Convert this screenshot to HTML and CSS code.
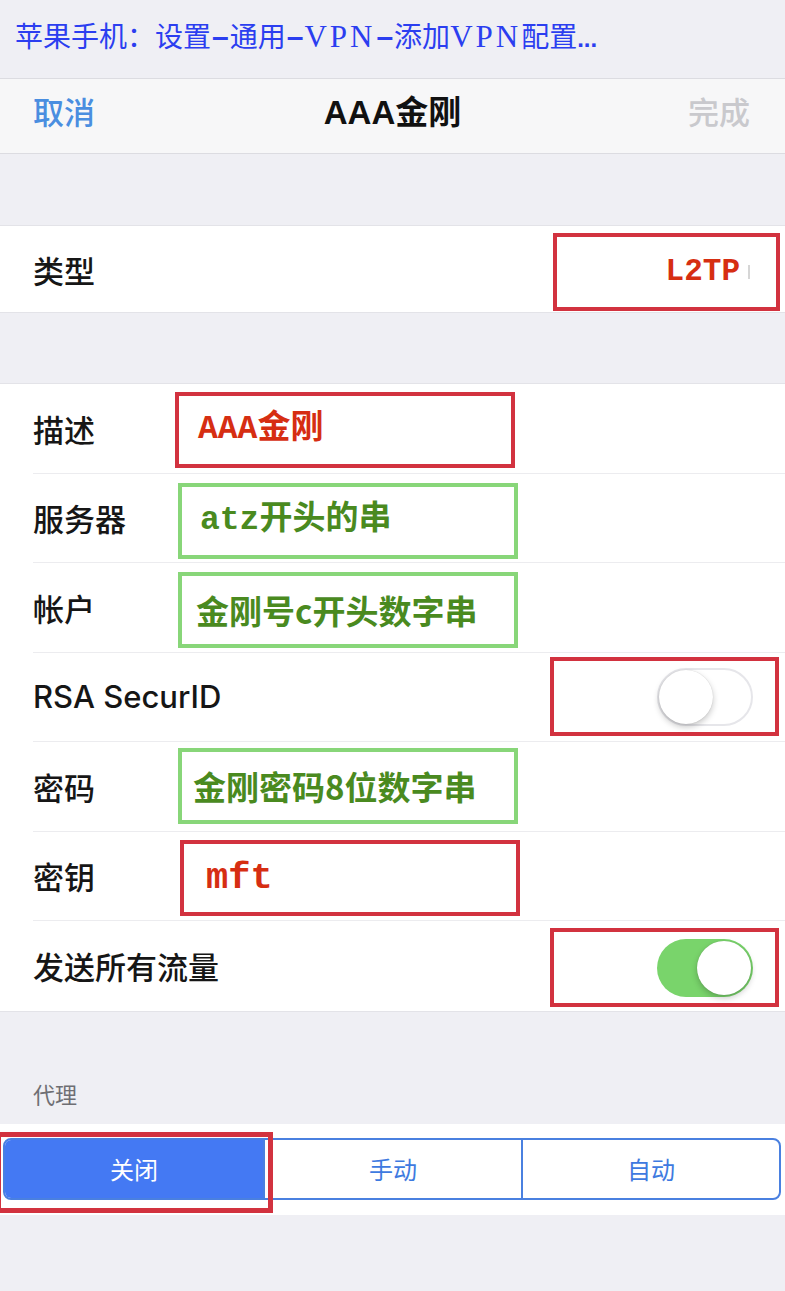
FILE: index.html
```html
<!DOCTYPE html>
<html lang="zh-CN">
<head>
<meta charset="utf-8">
<title>VPN 配置</title>
<link rel="stylesheet" href="styles.css">
</head>
<body>
<div class="caption">苹果手机：设置<span class="dash">–</span>通用<span class="dash">–</span><span class="lat">VPN</span><span class="dash">–</span>添加<span class="lat">VPN</span>配置<span class="dots">...</span></div>

<div class="navbar">
  <span class="nav-cancel">取消</span>
  <span class="nav-title">AAA金刚</span>
  <span class="nav-done">完成</span>
</div>

<div class="gap gap-top"></div>

<div class="group group-type">
  <div class="row row-type">
    <span class="label">类型</span>
    <div class="mark mark-red mark-right mark-type">
      <span class="val val-red mono val-type">L2TP</span><span class="caret"></span>
    </div>
  </div>
</div>

<div class="gap gap-mid"></div>

<div class="group">
  <div class="row">
    <span class="label">描述</span>
    <div class="mark mark-red field field-desc"><span class="val val-red mono">AAA金刚</span></div>
  </div>
  <div class="row">
    <span class="label">服务器</span>
    <div class="mark mark-green field field-server"><span class="val val-green mono">atz开头的串</span></div>
  </div>
  <div class="row">
    <span class="label">帐户</span>
    <div class="mark mark-green field field-account"><span class="val val-green sans">金刚号c开头数字串</span></div>
  </div>
  <div class="row">
    <span class="label">RSA SecurID</span>
    <div class="mark mark-red mark-right mark-switch">
      <div class="switch switch-off"><div class="knob"></div></div>
    </div>
  </div>
  <div class="row">
    <span class="label">密码</span>
    <div class="mark mark-green field field-pass"><span class="val val-green sans">金刚密码8位数字串</span></div>
  </div>
  <div class="row">
    <span class="label">密钥</span>
    <div class="mark mark-red field field-key"><span class="val val-red mono val-key">mft</span></div>
  </div>
  <div class="row row-last">
    <span class="label">发送所有流量</span>
    <div class="mark mark-red mark-right mark-switch mark-switch-on">
      <div class="switch switch-on"><div class="knob"></div></div>
    </div>
  </div>
</div>

<div class="section-head">代理</div>

<div class="seg-row">
  <div class="segmented">
    <span class="seg seg-active">关闭</span>
    <span class="seg">手动</span>
    <span class="seg">自动</span>
  </div>
  <div class="seg-mark"></div>
</div>
</body>
</html>
```
FILE: styles.css
```css
* { box-sizing: border-box; }

html, body {
  margin: 0;
  padding: 0;
}

body {
  width: 785px;
  min-height: 1291px;
  background: #efeff4;
  font-family: "Liberation Sans", "Noto Sans CJK SC", sans-serif;
  color: #151515;
  overflow: hidden;
}

/* caption */
.caption {
  height: 78px;
  padding: 16px 0 0 15px;
  font-family: "Noto Sans CJK SC", sans-serif;
  font-size: 28px;
  line-height: 38px;
  color: #2b3ef0;
  white-space: nowrap;
}
.caption .lat {
  font-family: "Liberation Serif", serif;
  font-size: 31px;
  letter-spacing: 3px;
}
.caption .dash {
  font-family: "Liberation Sans", sans-serif;
  font-weight: bold;
  font-size: 30px;
  padding: 0 1px;
}
.caption .dots {
  font-family: "Liberation Sans", sans-serif;
  font-weight: bold;
  font-size: 24px;
}

/* nav bar */
.navbar {
  height: 76px;
  display: grid;
  grid-template-columns: 1fr auto 1fr;
  align-items: center;
  padding-bottom: 12px;
  background: #f7f7f8;
  border-top: 1px solid #dcdce1;
  border-bottom: 1px solid #dcdce1;
  font-size: 31px;
}
.nav-cancel {
  padding-left: 33px;
  color: #4a8ee0;
  font-family: "Noto Sans CJK SC", sans-serif;
  font-weight: 500;
}
.nav-title {
  font-weight: bold;
  color: #111;
  font-size: 33px;
}
.nav-done {
  text-align: right;
  padding-right: 35px;
  color: #c9c9cd;
  font-family: "Noto Sans CJK SC", sans-serif;
  font-weight: 500;
}

.gap-top { height: 71px; }
.gap-mid { height: 70px; }

/* groups */
.group {
  background: #fff;
  border-top: 1px solid #e3e3e8;
  border-bottom: 1px solid #e3e3e8;
}
.row {
  display: flex;
  align-items: center;
  height: 89.5px;
  margin-left: 33px;
  border-bottom: 1px solid #ececef;
}
.row-last { border-bottom: none; }
.row-type {
  height: 86px;
  border-bottom: none;
}

.label {
  width: 142px;
  flex: none;
  font-family: "Inter", "Noto Sans CJK SC", sans-serif;
  font-size: 31px;
  font-weight: 500;
  color: #161616;
  white-space: nowrap;
}

/* annotation boxes */
.mark {
  border: 4px solid;
  display: flex;
  align-items: center;
}
.mark-red { border-color: #d2323f; }
.mark-green { border-color: #88d679; }

.field {
  width: 340px;
  height: 76px;
  padding-left: 16px;
}
.field-desc { margin-top: 3px; padding-left: 19px; }
.field-server { margin-left: 3px; margin-top: 6px; padding-left: 18px; }
.field-account { margin-left: 3px; margin-top: 6px; padding-left: 14px; }
.field-pass { margin-left: 3px; padding-left: 11px; }
.field-key { margin-left: 5px; margin-top: 4px; padding-left: 22px; }

.mark-right {
  margin-left: auto;
  justify-content: flex-end;
}
.mark-type {
  width: 227px;
  height: 78px;
  margin-right: 5px;
  margin-top: 5px;
  padding-right: 26px;
}
.mark-switch {
  width: 229px;
  height: 79px;
  margin-right: 6px;
  padding-right: 22px;
}
.mark-switch-on { margin-top: 4px; }

.val {
  font-size: 33px;
  font-weight: bold;
  white-space: nowrap;
  line-height: 40px;
}
.val-red { color: #d62e12; }
.val-green { color: #4a8a1f; }
.mono { font-family: "Liberation Mono", "Noto Sans CJK SC", monospace; }
.sans { font-family: "Noto Sans CJK SC", sans-serif; }
.val-type { font-size: 31px; }
.val-key { font-size: 37px; }

.caret {
  width: 2px;
  height: 14px;
  margin-left: 8px;
  background: #d6d6d6;
}

/* switches */
.switch {
  width: 96px;
  height: 58px;
  border-radius: 29px;
  display: flex;
  align-items: center;
  padding: 2px;
}
.switch-off {
  background: #fff;
  border: 2px solid #e6e6ea;
  padding: 0;
  justify-content: flex-start;
}
.switch-on {
  background: #79d46b;
  justify-content: flex-end;
}
.knob {
  width: 54px;
  height: 54px;
  border-radius: 50%;
  background: #fff;
  box-shadow: 0 3px 6px rgba(0, 0, 0, 0.22), 0 0 1px rgba(0, 0, 0, 0.2);
}

/* proxy section */
.section-head {
  height: 112px;
  display: flex;
  align-items: flex-end;
  padding: 0 0 17px 33px;
  font-family: "Noto Sans CJK SC", sans-serif;
  font-size: 22px;
  line-height: 28px;
  color: #6e6e73;
}

.seg-row {
  position: relative;
  height: 91px;
  background: #fff;
  padding: 14px 4px 0 3px;
}
.segmented {
  height: 62px;
  display: grid;
  grid-template-columns: repeat(3, 1fr);
  border: 2px solid #4a80e0;
  border-radius: 8px;
  overflow: hidden;
}
.seg {
  display: flex;
  align-items: center;
  justify-content: center;
  font-family: "Noto Sans CJK SC", sans-serif;
  font-size: 24px;
  color: #3e7ae0;
  border-left: 2px solid #4a80e0;
}
.seg:first-child { border-left: none; }
.seg-active {
  background: #4479f3;
  color: #fff;
}
.seg-mark {
  position: absolute;
  left: -4px;
  top: 8px;
  width: 277px;
  height: 81px;
  border: 5px solid #d2323f;
}
```
